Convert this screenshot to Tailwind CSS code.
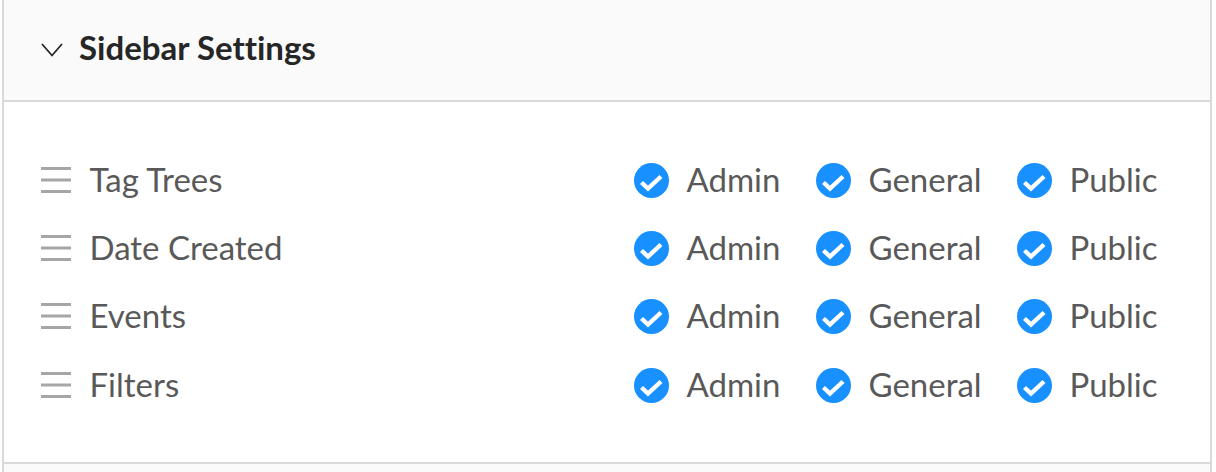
<!DOCTYPE html>
<html><head><meta charset="utf-8"><script src="https://cdn.jsdelivr.net/npm/@tailwindcss/browser@4"></script></head>
<body class="bg-white">
<div class="w-[1216px] h-[472px] overflow-hidden bg-white font-['Lato',sans-serif] [font-variant-ligatures:none]">
<div class="ml-[2px] w-[1210px] h-[472px] border-x-2 border-[#d9d9d9] flex flex-col">
<div class="h-[100px] shrink-0 bg-[#fafafa] flex items-center pl-[37px] text-[#262626]">
<svg class="w-[22px] h-[14px] mr-[16px]" viewBox="0 0 22 14" fill="none" stroke="#262626" stroke-width="1.8"><path d="M1 1 L11 12.5 L21 1"/></svg>
<span class="text-[33px] font-bold leading-none relative -top-[3px]">Sidebar Settings</span>
</div>
<div class="h-[2px] shrink-0 bg-[#d9d9d9]"></div>
<div class="h-[360px] shrink-0 pt-[44px] pr-[36px] text-[33px] text-[#595959]">

<div class="h-[68px] flex items-center pl-[36px]">
<svg class="w-[32px] h-[28px] mr-[17.5px] shrink-0" viewBox="0 0 32 28"><path d="M1 2.5H31M1 14H31M1 25.5H31" stroke="#a6a6a6" stroke-width="3"/></svg>
<span>Tag Trees</span>
<div class="ml-auto flex items-center">
<span class="flex items-center w-[182px]"><svg class="w-[35px] h-[35px] mr-[17.5px]" viewBox="0 0 35 35"><circle cx="17.5" cy="17.5" r="17.5" fill="#1890ff"/><path d="M7.5 19.5 L14 25.5 L27 13.5" fill="none" stroke="#fff" stroke-width="4.4"/></svg>Admin</span>
<span class="flex items-center w-[201px]"><svg class="w-[35px] h-[35px] mr-[17.5px]" viewBox="0 0 35 35"><circle cx="17.5" cy="17.5" r="17.5" fill="#1890ff"/><path d="M7.5 19.5 L14 25.5 L27 13.5" fill="none" stroke="#fff" stroke-width="4.4"/></svg>General</span>
<span class="flex items-center w-[157px]"><svg class="w-[35px] h-[35px] mr-[17.5px]" viewBox="0 0 35 35"><circle cx="17.5" cy="17.5" r="17.5" fill="#1890ff"/><path d="M7.5 19.5 L14 25.5 L27 13.5" fill="none" stroke="#fff" stroke-width="4.4"/></svg>Public</span>
</div></div>

<div class="h-[68px] flex items-center pl-[36px]">
<svg class="w-[32px] h-[28px] mr-[17.5px] shrink-0" viewBox="0 0 32 28"><path d="M1 2.5H31M1 14H31M1 25.5H31" stroke="#a6a6a6" stroke-width="3"/></svg>
<span>Date Created</span>
<div class="ml-auto flex items-center">
<span class="flex items-center w-[182px]"><svg class="w-[35px] h-[35px] mr-[17.5px]" viewBox="0 0 35 35"><circle cx="17.5" cy="17.5" r="17.5" fill="#1890ff"/><path d="M7.5 19.5 L14 25.5 L27 13.5" fill="none" stroke="#fff" stroke-width="4.4"/></svg>Admin</span>
<span class="flex items-center w-[201px]"><svg class="w-[35px] h-[35px] mr-[17.5px]" viewBox="0 0 35 35"><circle cx="17.5" cy="17.5" r="17.5" fill="#1890ff"/><path d="M7.5 19.5 L14 25.5 L27 13.5" fill="none" stroke="#fff" stroke-width="4.4"/></svg>General</span>
<span class="flex items-center w-[157px]"><svg class="w-[35px] h-[35px] mr-[17.5px]" viewBox="0 0 35 35"><circle cx="17.5" cy="17.5" r="17.5" fill="#1890ff"/><path d="M7.5 19.5 L14 25.5 L27 13.5" fill="none" stroke="#fff" stroke-width="4.4"/></svg>Public</span>
</div></div>

<div class="h-[68px] flex items-center pl-[36px]">
<svg class="w-[32px] h-[28px] mr-[17.5px] shrink-0" viewBox="0 0 32 28"><path d="M1 2.5H31M1 14H31M1 25.5H31" stroke="#a6a6a6" stroke-width="3"/></svg>
<span>Events</span>
<div class="ml-auto flex items-center">
<span class="flex items-center w-[182px]"><svg class="w-[35px] h-[35px] mr-[17.5px]" viewBox="0 0 35 35"><circle cx="17.5" cy="17.5" r="17.5" fill="#1890ff"/><path d="M7.5 19.5 L14 25.5 L27 13.5" fill="none" stroke="#fff" stroke-width="4.4"/></svg>Admin</span>
<span class="flex items-center w-[201px]"><svg class="w-[35px] h-[35px] mr-[17.5px]" viewBox="0 0 35 35"><circle cx="17.5" cy="17.5" r="17.5" fill="#1890ff"/><path d="M7.5 19.5 L14 25.5 L27 13.5" fill="none" stroke="#fff" stroke-width="4.4"/></svg>General</span>
<span class="flex items-center w-[157px]"><svg class="w-[35px] h-[35px] mr-[17.5px]" viewBox="0 0 35 35"><circle cx="17.5" cy="17.5" r="17.5" fill="#1890ff"/><path d="M7.5 19.5 L14 25.5 L27 13.5" fill="none" stroke="#fff" stroke-width="4.4"/></svg>Public</span>
</div></div>

<div class="h-[68px] mt-px flex items-center pl-[36px]">
<svg class="w-[32px] h-[28px] mr-[17.5px] shrink-0" viewBox="0 0 32 28"><path d="M1 2.5H31M1 14H31M1 25.5H31" stroke="#a6a6a6" stroke-width="3"/></svg>
<span>Filters</span>
<div class="ml-auto flex items-center">
<span class="flex items-center w-[182px]"><svg class="w-[35px] h-[35px] mr-[17.5px]" viewBox="0 0 35 35"><circle cx="17.5" cy="17.5" r="17.5" fill="#1890ff"/><path d="M7.5 19.5 L14 25.5 L27 13.5" fill="none" stroke="#fff" stroke-width="4.4"/></svg>Admin</span>
<span class="flex items-center w-[201px]"><svg class="w-[35px] h-[35px] mr-[17.5px]" viewBox="0 0 35 35"><circle cx="17.5" cy="17.5" r="17.5" fill="#1890ff"/><path d="M7.5 19.5 L14 25.5 L27 13.5" fill="none" stroke="#fff" stroke-width="4.4"/></svg>General</span>
<span class="flex items-center w-[157px]"><svg class="w-[35px] h-[35px] mr-[17.5px]" viewBox="0 0 35 35"><circle cx="17.5" cy="17.5" r="17.5" fill="#1890ff"/><path d="M7.5 19.5 L14 25.5 L27 13.5" fill="none" stroke="#fff" stroke-width="4.4"/></svg>Public</span>
</div></div>
</div>
<div class="h-[2px] shrink-0 bg-[#d9d9d9]"></div>
<div class="flex-1 bg-[#fafafa]"></div>
</div>
</div>
</body></html>
